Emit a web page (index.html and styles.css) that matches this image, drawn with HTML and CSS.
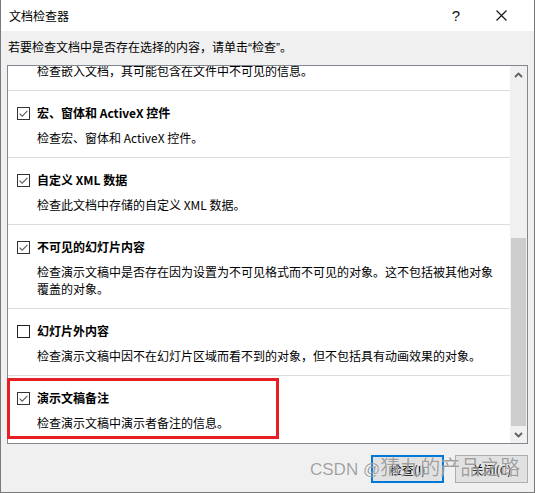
FILE: index.html
```html
<!DOCTYPE html>
<html lang="zh-CN">
<head>
<meta charset="utf-8">
<title>文档检查器</title>
<link rel="stylesheet" href="styles.css">
</head>
<body>
<div class="window">
  <div class="titlebar">
    <span class="title">文档检查器</span>
    <div class="tb-buttons">
      <span class="tb-btn help">?</span>
      <span class="tb-btn close">
        <svg width="11" height="11" viewBox="0 0 11 11"><path d="M0.5 0.5 L10.5 10.5 M10.5 0.5 L0.5 10.5" stroke="#111" stroke-width="1.1" fill="none"/></svg>
      </span>
    </div>
  </div>
  <div class="content">
    <p class="intro">若要检查文档中是否存在选择的内容，请单击<span class="q">“</span>检查<span class="q">”</span>。</p>
    <div class="listbox">
      <div class="viewport">
        <div class="items">
          <div class="item">
            <div class="item-title"><span class="cb checked"><svg width="13" height="13" viewBox="0 0 13 13"><rect x="0.5" y="0.5" width="12" height="12" fill="#fff" stroke="#333"/><path d="M2.6 6.6 L5.2 9.2 L10.4 3.8" stroke="#5c5c5c" stroke-width="1.1" fill="none"/></svg></span>嵌入文档</div>
            <div class="item-desc">检查嵌入文档，其可能包含在文件中不可见的信息。</div>
          </div>
          <div class="item">
            <div class="item-title"><span class="cb checked"><svg width="13" height="13" viewBox="0 0 13 13"><rect x="0.5" y="0.5" width="12" height="12" fill="#fff" stroke="#333"/><path d="M2.6 6.6 L5.2 9.2 L10.4 3.8" stroke="#5c5c5c" stroke-width="1.1" fill="none"/></svg></span>宏、窗体和 ActiveX 控件</div>
            <div class="item-desc">检查宏、窗体和 ActiveX 控件。</div>
          </div>
          <div class="item">
            <div class="item-title"><span class="cb checked"><svg width="13" height="13" viewBox="0 0 13 13"><rect x="0.5" y="0.5" width="12" height="12" fill="#fff" stroke="#333"/><path d="M2.6 6.6 L5.2 9.2 L10.4 3.8" stroke="#5c5c5c" stroke-width="1.1" fill="none"/></svg></span>自定义 XML 数据</div>
            <div class="item-desc">检查此文档中存储的自定义 XML 数据。</div>
          </div>
          <div class="item">
            <div class="item-title"><span class="cb checked"><svg width="13" height="13" viewBox="0 0 13 13"><rect x="0.5" y="0.5" width="12" height="12" fill="#fff" stroke="#333"/><path d="M2.6 6.6 L5.2 9.2 L10.4 3.8" stroke="#5c5c5c" stroke-width="1.1" fill="none"/></svg></span>不可见的幻灯片内容</div>
            <div class="item-desc">检查演示文稿中是否存在因为设置为不可见格式而不可见的对象。这不包括被其他对象覆盖的对象。</div>
          </div>
          <div class="item">
            <div class="item-title"><span class="cb"><svg width="13" height="13" viewBox="0 0 13 13"><rect x="0.5" y="0.5" width="12" height="12" fill="#fff" stroke="#222"/></svg></span>幻灯片外内容</div>
            <div class="item-desc">检查演示文稿中因不在幻灯片区域而看不到的对象，但不包括具有动画效果的对象。</div>
          </div>
          <div class="item last">
            <div class="item-title"><span class="cb checked"><svg width="13" height="13" viewBox="0 0 13 13"><rect x="0.5" y="0.5" width="12" height="12" fill="#fff" stroke="#333"/><path d="M2.6 6.6 L5.2 9.2 L10.4 3.8" stroke="#5c5c5c" stroke-width="1.1" fill="none"/></svg></span>演示文稿备注</div>
            <div class="item-desc">检查演示文稿中演示者备注的信息。</div>
          </div>
        </div>
      </div>
      <div class="scrollbar">
        <div class="sb-arrow">
          <svg width="9" height="6" viewBox="0 0 9 6"><path d="M1 5 L4.5 1.5 L8 5" stroke="#606060" stroke-width="1.8" fill="none"/></svg>
        </div>
        <div class="sb-track"><div class="sb-thumb"></div></div>
        <div class="sb-arrow">
          <svg width="9" height="6" viewBox="0 0 9 6"><path d="M1 1 L4.5 4.5 L8 1" stroke="#606060" stroke-width="1.8" fill="none"/></svg>
        </div>
      </div>
    </div>
    <div class="buttons">
      <button class="btn default">检查(I)</button>
      <button class="btn">关闭(C)</button>
    </div>
  </div>
  <div class="highlight"></div>
  <div class="watermark"><span class="wm-latin">CSDN @</span><span class="wm-cjk">猜九的产品之路</span></div>
</div>
</body>
</html>
```
FILE: styles.css
```css
* { box-sizing: border-box; }
html, body { margin: 0; padding: 0; background: #fff; }
body {
  font-family: "Noto Sans CJK SC", "Noto Sans", sans-serif;
  font-size: 12px;
  color: #000;
}
.window {
  position: relative;
  width: 535px;
  height: 493px;
  border: 1px solid #7a7a7a;
  border-top: none;
  display: flex;
  flex-direction: column;
  background: #f0f0f0;
  overflow: hidden;
}
.titlebar {
  height: 31px;
  background: #fff;
  display: flex;
  align-items: center;
  justify-content: space-between;
  padding-left: 8px;
}
.title { font-size: 12px; line-height: 16px; }
.tb-buttons { display: flex; height: 31px; margin-right: 10px; }
.tb-btn {
  display: flex;
  align-items: center;
  justify-content: center;
  height: 31px;
}
.help {
  width: 44px;
  font-family: "Liberation Sans", sans-serif;
  font-size: 15px;
  color: #111;
}
.close { width: 46px; }
.content {
  flex: 1;
  padding: 0 6px;
  display: flex;
  flex-direction: column;
}
.intro {
  margin: 8px 0 9px 1px;
  line-height: 16px;
}
.q { font-family: "Liberation Sans", sans-serif; }
.listbox {
  height: 379px;
  border: 1px solid #828790;
  background: #fff;
  display: flex;
}
.viewport {
  flex: 1;
  overflow: hidden;
}
.items { margin-top: -42px; }
.item {
  padding: 12px 11px 11px 9px;
  border-bottom: 1px solid #dcdcdc;
}
.item.last { border-bottom: none; }
.item-title {
  display: flex;
  align-items: center;
  height: 20px;
  line-height: 20px;
  font-weight: bold;
}
.cb {
  display: flex;
  width: 13px;
  height: 13px;
  margin-right: 7px;
}
.item-desc {
  margin-top: 6px;
  padding-left: 20px;
  line-height: 17px;
}
.scrollbar {
  width: 17px;
  background: #f0f0f0;
  display: flex;
  flex-direction: column;
}
.sb-arrow {
  height: 17px;
  display: flex;
  align-items: center;
  justify-content: center;
}
.sb-track {
  flex: 1;
  padding-top: 155px;
  display: flex;
  flex-direction: column;
}
.sb-thumb {
  flex: 1;
  background: #cdcdcd;
  margin: 0 1px;
}
.buttons {
  margin-top: 11px;
  display: flex;
  justify-content: flex-end;
  gap: 11px;
}
.btn {
  width: 73px;
  height: 28px;
  background: #e1e1e1;
  border: 1px solid #adadad;
  font-family: "Noto Sans CJK SC", sans-serif;
  font-size: 12px;
  color: #000;
  padding: 0;
}
.btn.default { border: 2px solid #0078d7; }
.highlight {
  position: absolute;
  left: 6px;
  top: 378px;
  width: 272px;
  height: 61px;
  border: 3px solid #e61e26;
}
.watermark {
  position: absolute;
  left: 309px;
  top: 454px;
  display: flex;
  align-items: baseline;
  white-space: nowrap;
  color: rgba(95, 95, 95, 0.6);
  text-shadow: 0 0 1px #fff;
}
.wm-latin {
  font-family: "Liberation Sans", sans-serif;
  font-size: 17px;
  line-height: 26px;
}
.wm-cjk {
  font-family: "Noto Sans CJK SC", sans-serif;
  font-size: 20px;
  line-height: 26px;
}
```
